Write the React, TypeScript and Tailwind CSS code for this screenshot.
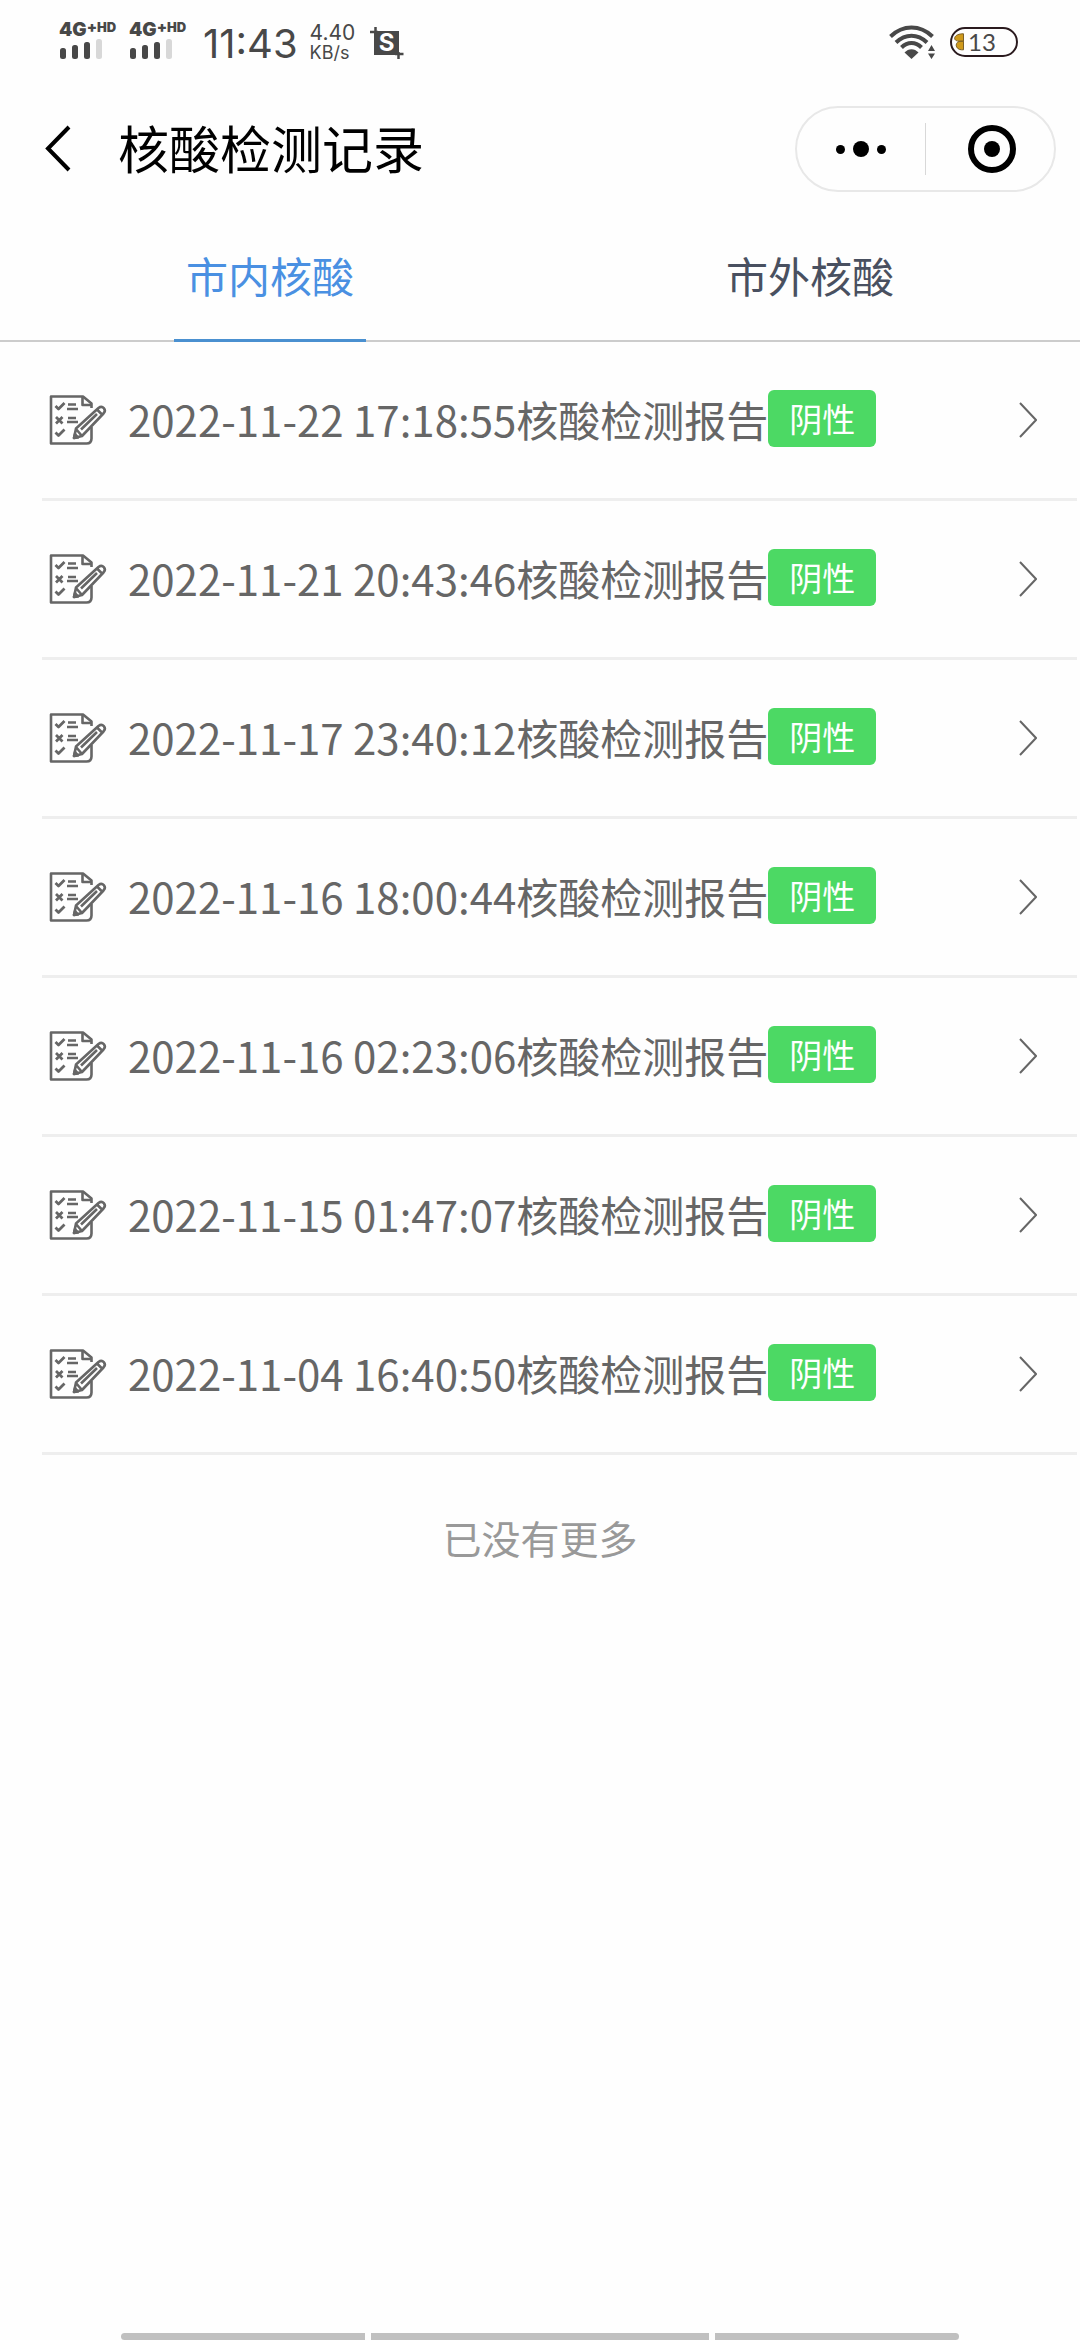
const records = [
  "2022-11-22 17:18:55",
  "2022-11-21 20:43:46",
  "2022-11-17 23:40:12",
  "2022-11-16 18:00:44",
  "2022-11-16 02:23:06",
  "2022-11-15 01:47:07",
  "2022-11-04 16:40:50",
];

function Signal() {
  return (
    <div className="flex w-[58px] flex-col">
      <div className="flex h-[17px] items-start font-['Inter'] font-black">
        <span className="text-[19px] leading-4">4G</span>
        <span className="text-[15px] leading-[10px]">+</span>
        <span className="text-[13px] leading-[10px]">HD</span>
      </div>
      <svg className="h-5 w-11" viewBox="0 0 44 20" aria-hidden="true">
        <rect x="1" y="9" width="6" height="11" rx="2.5" fill="#484848" />
        <rect x="13" y="6" width="6" height="14" rx="2.5" fill="#484848" />
        <rect x="25" y="3" width="6" height="17" rx="2.5" fill="#484848" />
        <rect x="37" y="0" width="6" height="20" rx="2.5" fill="#d8d8d8" />
      </svg>
    </div>
  );
}

function ScreenshotIcon() {
  return (
    <svg className="h-[34px] w-[34px]" viewBox="0 0 34 34" aria-hidden="true">
      <rect x="4" y="5" width="25" height="24" fill="#484848" />
      <path d="M5.500 1v7M0 6h8M28.500 26v7M25 28h8.500" stroke="#484848" strokeWidth="2.500" fill="none" />
      <text x="16.500" y="25" textAnchor="middle" fontFamily="Inter" fontWeight="700" fontSize="24" fill="#fff">S</text>
    </svg>
  );
}

function WifiIcon() {
  return (
    <svg className="h-[34px] w-[47px]" viewBox="0 0 47 34" aria-hidden="true">
      <g fill="none" stroke="#484848" strokeWidth="4">
        <path d="M1.500 11.500C14-.5 31-.5 43.500 11.500" />
        <path d="M7 17.500c9.500-9 21.500-9 31 0" />
        <path d="M12.500 22.500c6-6 14-6 20 0" />
      </g>
      <path d="M15.500 27.500c4-4.500 10-4.500 14 0l-7 6.500z" fill="#484848" />
      <path d="M39 26l3.500-6 3.500 6zM39 28.500l3.500 5.500 3.500-5.500z" fill="#484848" />
    </svg>
  );
}

function Battery() {
  return (
    <div className="flex h-[30px] w-[68px] items-center rounded-full border-2 border-[#2a1a1e]">
      <svg className="ml-[2px] h-[18px] w-[10px]" viewBox="0 0 10 18" aria-hidden="true">
        <path d="M9.500.8v7.400H5.500C2 8.200 0 6.500.8 4.500 1.700 2 5 .8 9.500.8zM9.500 8.200v8.600H7.500C4.500 16.800 2.200 14.500 2.200 12.200S4 8.200 7 8.200z" fill="#cf9a1c" stroke="#7d6128" strokeWidth="1" />
      </svg>
      <span className="ml-1 font-['Lato'] text-2xl leading-6 text-[#484848]">13</span>
    </div>
  );
}

function ReportIcon() {
  return (
    <svg className="h-[52px] w-[60px] shrink-0" viewBox="0 0 60 52" fill="none" stroke="#666" strokeWidth="2.600" strokeLinejoin="round" aria-hidden="true">
      <path d="M43.500 14V9.500L35 2.500H3v47h35.500q5 0 5-5V33" />
      <path d="M34.500 2.500v8.500h9" />
      <path d="M7.500 12l3 3 6-6M7.500 38.500l3 3 6-6M8 23l6.500 6.500M14.500 23L8 29.500" strokeWidth="2.800" />
      <path d="M20 10.500h8M19 15h11M20 24h8M19 28h11" />
      <path d="M26 44l2-9.500L50.500 14c4-3 8.500 1.500 5 5.500L34 42zM28 35l6 7M49 15.500l6 6M33 35.500L49 20" fill="#fff" />
      <path d="M26 44l1-4 3 3.500z" fill="#666" />
    </svg>
  );
}

export default function App() {
  return (
    <div className="flex min-h-screen flex-col bg-[#fefefe] font-['Noto_Sans_CJK_SC',sans-serif]">
      <div className="flex h-[84px] items-center justify-between pr-[62px] pl-[59px] text-[#484848]">
        <div className="flex items-center">
          <div className="flex gap-3 pb-1">
            <Signal />
            <Signal />
          </div>
          <span className="ml-4 pt-1 font-['Inter'] text-[40px] leading-[48px]">11:43</span>
          <div className="ml-3 flex w-[50px] flex-col pt-[2px] font-['Inter']">
            <span className="text-[21px] leading-5">4.40</span>
            <span className="text-[18px] leading-5">KB/s</span>
          </div>
          <div className="ml-[10px] pt-[2px]">
            <ScreenshotIcon />
          </div>
        </div>
        <div className="flex items-center gap-[14px]">
          <WifiIcon />
          <Battery />
        </div>
      </div>

      <header className="flex h-[130px] items-center pr-6 pl-10">
        <button type="button" aria-label="返回" className="flex h-16 w-[78px] items-center">
          <svg className="h-12 w-10" viewBox="0 0 40 48" fill="none" stroke="#000" strokeWidth="4" aria-hidden="true">
            <path d="M29 2L8 23.500 29 45" />
          </svg>
        </button>
        <h1 className="pb-1 text-[51px] leading-[64px] text-black">核酸检测记录</h1>
        <div className="ml-auto flex h-[86px] w-[261px] items-center rounded-full border-2 border-[#e8e8e8]">
          <button type="button" aria-label="更多" className="flex flex-1 items-center justify-center gap-2">
            <span className="size-[9px] rounded-full bg-black" />
            <span className="size-4 rounded-full bg-black" />
            <span className="size-[9px] rounded-full bg-black" />
          </button>
          <span className="h-[52px] w-px bg-[#d8d8d8]" />
          <button type="button" aria-label="关闭" className="flex w-32 items-center justify-center pl-1">
            <span className="flex size-12 items-center justify-center rounded-full border-[6px] border-black">
              <span className="size-4 rounded-full bg-black" />
            </span>
          </button>
        </div>
      </header>

      <div role="tablist" className="grid h-32 grid-cols-2 bg-[linear-gradient(#cccccc,#cccccc)] bg-[length:100%_2px] bg-[position:0_126px] bg-no-repeat text-[42px] leading-[64px]">
        <button type="button" role="tab" aria-selected="true" className="flex w-48 items-center justify-center justify-self-center border-b-[3px] border-[#4a90d0] pb-[3px] text-[#4a90e2]">
          市内核酸
        </button>
        <button type="button" role="tab" aria-selected="false" className="flex w-48 items-center justify-center justify-self-center border-b-[3px] border-transparent pb-[3px] text-[#495060]">
          市外核酸
        </button>
      </div>

      <ul className="mr-[3px] ml-[42px]">
        {records.map((time) => (
          <li key={time} className="border-b-[3px] border-[#eeeeee]">
            <a href="#report" className="flex h-[156px] items-center pr-10 pl-[6px]">
              <ReportIcon />
              <span className="ml-5 flex items-center pb-[3px]">
                <span className="text-[42px] leading-[60px] whitespace-nowrap text-[#666666]">{time}核酸检测报告</span>
                <span className="flex h-[57px] w-[108px] items-center justify-center rounded-md bg-[#4cd964] pb-[2px] text-[33px] leading-[48px] text-white">阴性</span>
              </span>
              <svg className="ml-auto h-9 w-[18px]" viewBox="0 0 18 36" fill="none" stroke="#666" strokeWidth="2" aria-hidden="true">
                <path d="M1 1l16 17L1 35" />
              </svg>
            </a>
          </li>
        ))}
      </ul>

      <p className="mt-[54px] text-center text-[39px] leading-[56px] text-[#999999]">已没有更多</p>

      <div className="mx-[121px] mt-auto grid h-[7px] grid-cols-[244fr_338fr_244fr] gap-[6px]">
        <span className="rounded-l-md bg-[#c0c0c0]" />
        <span className="bg-[#c0c0c0]" />
        <span className="rounded-r-md bg-[#c0c0c0]" />
      </div>
    </div>
  );
}
